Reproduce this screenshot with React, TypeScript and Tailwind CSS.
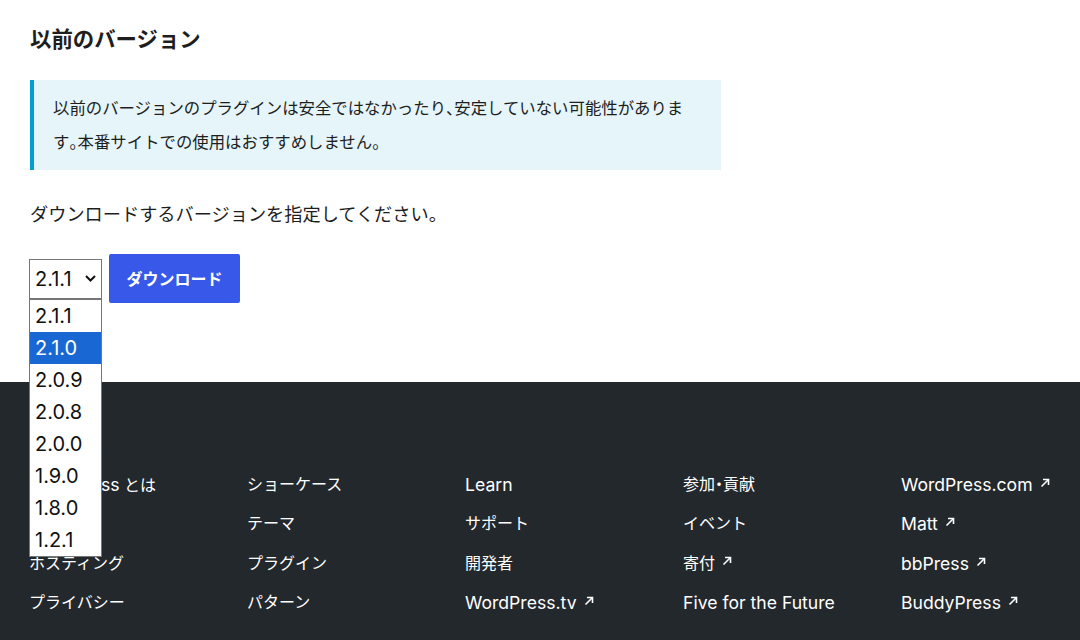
import React from "react";

const versions = ["2.1.1", "2.1.0", "2.0.9", "2.0.8", "2.0.0", "1.9.0", "1.8.0", "1.2.1"];

type FooterLink = { label: React.ReactNode; key: string; external?: boolean };

// Latin words render a touch larger than the Japanese text beside them
function L({ children }: { children: React.ReactNode }) {
  return <span className="text-[1.1em]">{children}</span>;
}

// half-width punctuation
function P({ children }: { children: React.ReactNode }) {
  return <span className="tracking-[-0.5em]">{children}</span>;
}

const footerColumns: FooterLink[][] = [
  [
    { key: "about", label: <><L>WordPress</L> とは</> },
    { key: "news", label: "ニュース" },
    { key: "hosting", label: "ホスティング" },
    { key: "privacy", label: "プライバシー" },
  ],
  [
    { key: "showcase", label: "ショーケース" },
    { key: "themes", label: "テーマ" },
    { key: "plugins", label: "プラグイン" },
    { key: "patterns", label: "パターン" },
  ],
  [
    { key: "learn", label: <L>Learn</L> },
    { key: "support", label: "サポート" },
    { key: "developers", label: "開発者" },
    { key: "tv", label: <L>WordPress.tv</L>, external: true },
  ],
  [
    {
      key: "contribute",
      label: (
        <>
          参加<span className="mx-[-0.25em]">・</span>貢献
        </>
      ),
    },
    { key: "events", label: "イベント" },
    { key: "donate", label: "寄付", external: true },
    { key: "five", label: <L>Five for the Future</L> },
  ],
  [
    { key: "com", label: <L>WordPress.com</L>, external: true },
    { key: "matt", label: <L>Matt</L>, external: true },
    { key: "bbpress", label: <L>bbPress</L>, external: true },
    { key: "buddypress", label: <L>BuddyPress</L>, external: true },
  ],
];

function ExternalArrow() {
  return (
    <svg
      width="10"
      height="10"
      viewBox="0 0 10 10"
      className="ml-[7px] inline-block align-[3px]"
      fill="none"
      stroke="currentColor"
      strokeWidth="1.6"
    >
      <path d="M1.5 8.5 L8.5 1.5" />
      <path d="M3 1.5 H8.5 V7" />
    </svg>
  );
}

export default function App() {
  return (
    <div
      className="min-h-[640px] bg-white text-[#1e1e1e]"
      style={{ fontFamily: 'Inter, "Noto Sans CJK JP", sans-serif' }}
    >
      <section className="px-[30px] pt-[24px] pb-[79px]">
        <h2 className="text-[21.4px] font-bold leading-[30px]">以前のバージョン</h2>

        <div className="mt-[26px] w-[691px] border-l-4 border-[#00a0d2] bg-[#e5f5fa] py-[11px] pl-[19px] pr-[26px]">
          <p className="text-[16.4px] leading-[34px]">
            以前のバージョンのプラグインは安全ではなかったり<P>、</P>安定していない可能性があります<P>。</P>本番サイトでの使用はおすすめしません。
          </p>
        </div>

        <p className="mt-[30px] text-[18.2px] leading-[28px]">
          ダウンロードするバージョンを指定してください。
        </p>

        <div className="ml-[-1px] mt-[26px] flex items-center gap-[7px]">
          <div className="relative">
            <div className="flex h-[40px] w-[73px] items-center justify-between border border-[#767676] bg-white pl-[5px] pr-[5px] text-[20px] text-[#111]">
              <span>2.1.1</span>
              <svg width="11" height="7" viewBox="0 0 11 7" fill="none" stroke="#111" strokeWidth="2">
                <path d="M1 1 L5.5 5.5 L10 1" />
              </svg>
            </div>
            <ul className="absolute left-0 top-full z-10 w-[73px] border border-[#767676] bg-white text-[20px] text-[#111]">
              {versions.map((v) => (
                <li
                  key={v}
                  className={
                    v === "2.1.0"
                      ? "h-[32px] bg-[#1967d2] px-[5px] leading-[32px] text-white"
                      : "h-[32px] px-[5px] leading-[32px]"
                  }
                >
                  {v}
                </li>
              ))}
            </ul>
          </div>
          <button className="h-[49px] w-[131px] rounded-[2px] bg-[#3858e9] text-[16px] font-bold text-white">
            ダウンロード
          </button>
        </div>
      </section>

      <footer className="h-[258px] bg-[#23282d] pl-[29px] pt-[83px] text-white">
        <div className="grid grid-cols-[repeat(5,218px)]">
          {footerColumns.map((col, i) => (
            <ul key={i}>
              {col.map((item) => (
                <li key={item.key} className="h-[39.4px] text-[16px] leading-[39.4px]">
                  {item.label}
                  {item.external && <ExternalArrow />}
                </li>
              ))}
            </ul>
          ))}
        </div>
      </footer>
    </div>
  );
}
